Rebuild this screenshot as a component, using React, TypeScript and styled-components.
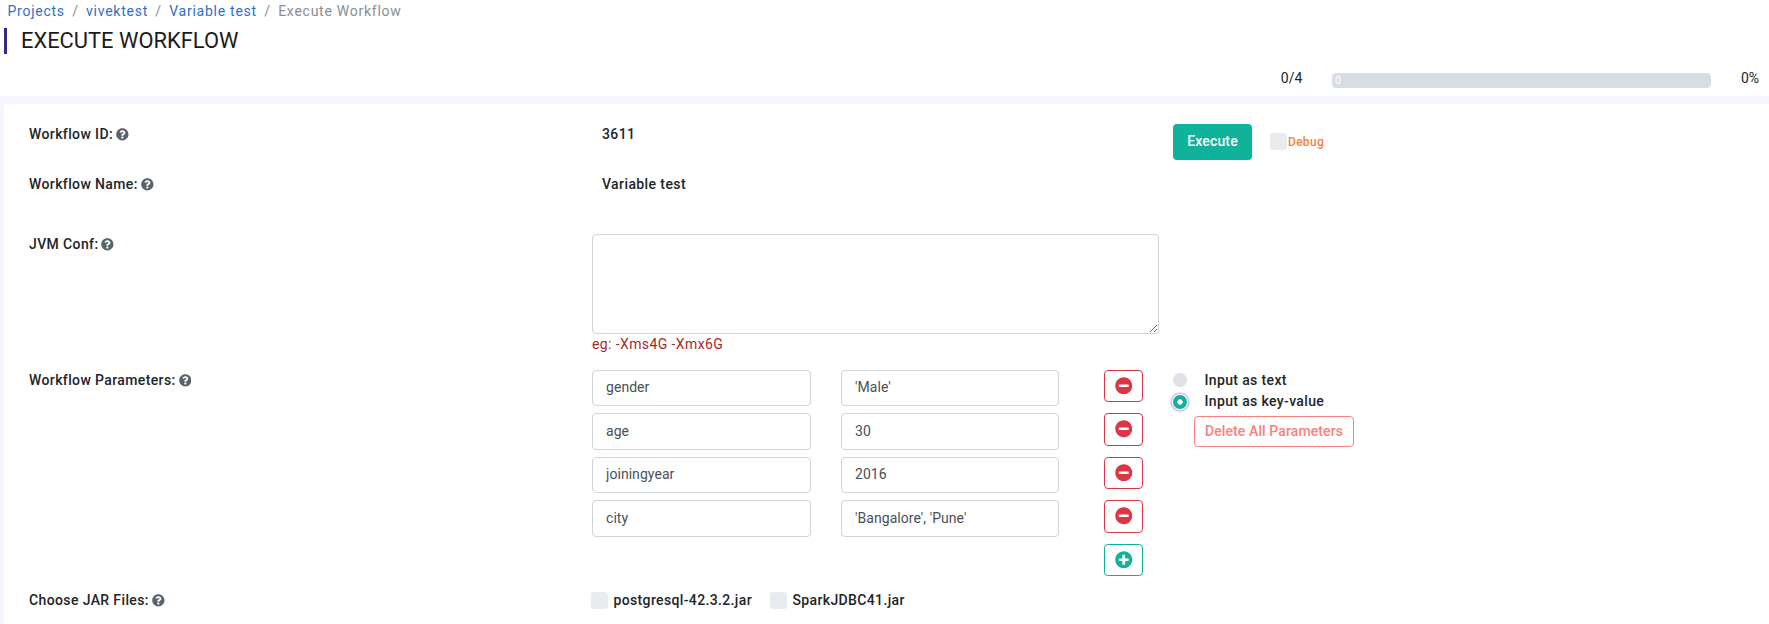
import React, { useState } from "react";
import styled, { createGlobalStyle, css } from "styled-components";
import { FaMinusCircle, FaPlusCircle, FaQuestionCircle } from "react-icons/fa";

const GlobalStyle = createGlobalStyle`
  *, *::before, *::after { box-sizing: border-box; }
  body {
    margin: 0;
    background: #f5f4ff;
    color: #212529;
    font-family: Roboto, "Liberation Sans", sans-serif;
    font-size: 14px;
    line-height: 21px;
    overflow: hidden;
  }
`;

const Page = styled.div`
  height: 624px;
  display: flex;
  flex-direction: column;
  gap: 8px;
  overflow: hidden;
`;

const Header = styled.header`
  height: 96px;
  flex: none;
  display: flex;
  flex-direction: column;
  background: #fff;
`;

const Breadcrumb = styled.nav`
  display: flex;
  height: 22px;
  padding-left: 7.5px;
  letter-spacing: 0.74px;
  line-height: 22px;
`;

const Crumb = styled.a<{ $current?: boolean }>`
  color: ${(p) => (p.$current ? "#868e96" : "#2f6fc4")};
  text-decoration: none;
  &:not(:first-child)::before {
    content: "/";
    padding: 0 7.4px;
    color: #868e96;
  }
`;

const Title = styled.h1`
  margin: 6px 0 0 4px;
  padding-left: 14px;
  height: 26px;
  border-left: 3px solid #3b2488;
  color: #1b1b1b;
  font-size: 21.9px;
  font-weight: 400;
  line-height: 25px;
`;

const ProgressRow = styled.div`
  display: flex;
  justify-content: flex-end;
  margin-top: 14px;
  padding-right: 10px;
  line-height: 20px;
`;

const ProgressTrack = styled.div`
  width: 379px;
  height: 15px;
  margin: 5px 30px 0 29.5px;
  padding-left: 3px;
  border-radius: 4px;
  background: #d6dde4;
  color: #fff;
  font-size: 10.5px;
  line-height: 15px;
`;

const Card = styled.main`
  flex: 1;
  margin-left: 4px;
  padding: 20px 0 0 25px;
  border-radius: 4px 0 0 0;
  background: #fff;
`;

const Row = styled.section<{ $height: number }>`
  display: grid;
  grid-template-columns: 563px 581px 1fr;
  height: ${(p) => p.$height}px;
`;

const Label = styled.div`
  display: flex;
  align-items: center;
  gap: 3px;
  height: 21px;
  font-weight: 500;
  letter-spacing: 0.38px;
  svg { color: #59636d; font-size: 12.7px; }
`;

const Value = styled.div`
  padding-left: 10px;
  font-weight: 500;
  letter-spacing: 0.4px;
`;

const Actions = styled.div`
  display: flex;
  align-items: flex-start;
`;

const ExecuteButton = styled.button`
  width: 79px;
  height: 36px;
  margin-right: 18px;
  padding: 0 0 2px;
  border: 0;
  border-radius: 4px;
  background: #10b29b;
  color: #fff;
  font: 500 14px/20px Roboto, sans-serif;
  letter-spacing: 0.15px;
`;

const Checkbox = styled.input.attrs({ type: "checkbox" })`
  appearance: none;
  width: 17px;
  height: 17px;
  margin: 0;
  border-radius: 3px;
  background: #e9ecef;
  &:checked { background: #10b29b; }
`;

const CheckLabel = styled.label<{ $debug?: boolean }>`
  display: flex;
  align-items: center;
  gap: 5.5px;
  height: 21px;
  font-weight: 500;
  letter-spacing: 0.36px;
  ${(p) =>
    p.$debug &&
    css`
      gap: 1px;
      margin-top: 7.5px;
      color: #f5813f;
      font-size: 12px;
      letter-spacing: 0.3px;
      ${Checkbox} { margin-bottom: 1.5px; }
    `}
`;

const JvmInput = styled.textarea`
  display: block;
  width: 567px;
  height: 100px;
  border: 1px solid #ced4da;
  border-radius: 4px;
  outline: none;
  font: inherit;
`;

const Hint = styled.div`
  color: #a52a2a;
  letter-spacing: 0.4px;
`;

const ParamList = styled.div`
  display: flex;
  flex-direction: column;
  gap: 7px;
`;

const ParamRow = styled.div`
  display: grid;
  grid-template-columns: 219px 218px 39px;
  column-gap: 30px;
  height: 36.5px;
`;

const ParamInput = styled.input`
  width: 100%;
  height: 36.5px;
  padding: 0 13px 2px;
  border: 1px solid #ced4da;
  border-radius: 4px;
  outline: none;
  color: #495057;
  font: 400 14px/21px Roboto, sans-serif;
  letter-spacing: 0.05px;
`;

const IconButton = styled.button<{ $tone: "remove" | "add" }>`
  display: flex;
  align-items: center;
  justify-content: center;
  grid-column: 3;
  width: 39px;
  height: 32.4px;
  margin-left: 15px;
  padding: 0 0.5px 0.5px 0;
  border: 1px solid currentColor;
  border-radius: 4px;
  background: #fff;
  color: ${(p) => (p.$tone === "add" ? "#10b29b" : "#dc3545")};
  font-size: 17.5px;
`;

const Modes = styled.div`
  display: flex;
  flex-direction: column;
  align-items: flex-start;
`;

const RadioLabel = styled.label`
  display: flex;
  align-items: center;
  gap: 17.5px;
  height: 21px;
  font-weight: 500;
  letter-spacing: 0.36px;
`;

const Radio = styled.input.attrs({ type: "radio" })`
  appearance: none;
  width: 14px;
  height: 14px;
  margin: 0;
  border-radius: 50%;
  background: #dee2e6;
  &:checked {
    margin-top: 1px;
    background: radial-gradient(circle, #fff 2.4px, #10b29b 3px);
    box-shadow: 0 0 0 1px #fff, 0 0 0 2.8px #cfcae2;
  }
`;

const DeleteButton = styled.button`
  width: 160px;
  height: 31px;
  margin: 4px 0 0 21px;
  padding: 0 0 1px;
  border: 1px solid #fb8080;
  border-radius: 4px;
  background: #fff;
  color: #fb8080;
  font: 500 14px/20px Roboto, sans-serif;
  letter-spacing: 0.1px;
`;

const JarList = styled.div`
  display: flex;
  align-items: flex-start;
  gap: 18px;
  margin-left: -1px;
`;

const HelpLabel = ({ children }: { children: React.ReactNode }) => (
  <Label>
    <span>{children}</span>
    <FaQuestionCircle />
  </Label>
);

const initialParams = [
  { key: "gender", value: "'Male'" },
  { key: "age", value: "30" },
  { key: "joiningyear", value: "2016" },
  { key: "city", value: "'Bangalore', 'Pune'" },
];

export default function App() {
  const [params, setParams] = useState(initialParams);
  const [mode, setMode] = useState("kv");

  const update = (index: number, patch: Partial<{ key: string; value: string }>) =>
    setParams(params.map((p, i) => (i === index ? { ...p, ...patch } : p)));

  return (
    <Page>
      <GlobalStyle />
      <Header>
        <Breadcrumb>
          <Crumb>Projects</Crumb>
          <Crumb>vivektest</Crumb>
          <Crumb>Variable test</Crumb>
          <Crumb $current>Execute Workflow</Crumb>
        </Breadcrumb>
        <Title>EXECUTE WORKFLOW</Title>
        <ProgressRow>
          <span>0/4</span>
          <ProgressTrack>0</ProgressTrack>
          <span>0%</span>
        </ProgressRow>
      </Header>
      <Card>
        <Row $height={50}>
          <HelpLabel>Workflow ID:</HelpLabel>
          <Value>3611</Value>
          <Actions>
            <ExecuteButton>Execute</ExecuteButton>
            <CheckLabel $debug>
              <Checkbox />
              Debug
            </CheckLabel>
          </Actions>
        </Row>
        <Row $height={60}>
          <HelpLabel>Workflow Name:</HelpLabel>
          <Value>Variable test</Value>
        </Row>
        <Row $height={135.8}>
          <HelpLabel>JVM Conf:</HelpLabel>
          <div>
            <JvmInput />
            <Hint>eg: -Xms4G -Xmx6G</Hint>
          </div>
        </Row>
        <Row $height={220.2}>
          <HelpLabel>Workflow Parameters:</HelpLabel>
          <ParamList>
            {params.map((p, i) => (
              <ParamRow key={i}>
                <ParamInput value={p.key} onChange={(e) => update(i, { key: e.target.value })} />
                <ParamInput value={p.value} onChange={(e) => update(i, { value: e.target.value })} />
                <IconButton $tone="remove" onClick={() => setParams(params.filter((_, n) => n !== i))}>
                  <FaMinusCircle />
                </IconButton>
              </ParamRow>
            ))}
            <ParamRow>
              <IconButton $tone="add" onClick={() => setParams([...params, { key: "", value: "" }])}>
                <FaPlusCircle />
              </IconButton>
            </ParamRow>
          </ParamList>
          <Modes>
            <RadioLabel>
              <Radio name="mode" checked={mode === "text"} onChange={() => setMode("text")} />
              Input as text
            </RadioLabel>
            <RadioLabel>
              <Radio name="mode" checked={mode === "kv"} onChange={() => setMode("kv")} />
              Input as key-value
            </RadioLabel>
            <DeleteButton onClick={() => setParams([])}>Delete All Parameters</DeleteButton>
          </Modes>
        </Row>
        <Row $height={32}>
          <HelpLabel>Choose JAR Files:</HelpLabel>
          <JarList>
            <CheckLabel>
              <Checkbox />
              postgresql-42.3.2.jar
            </CheckLabel>
            <CheckLabel>
              <Checkbox />
              SparkJDBC41.jar
            </CheckLabel>
          </JarList>
        </Row>
      </Card>
    </Page>
  );
}
